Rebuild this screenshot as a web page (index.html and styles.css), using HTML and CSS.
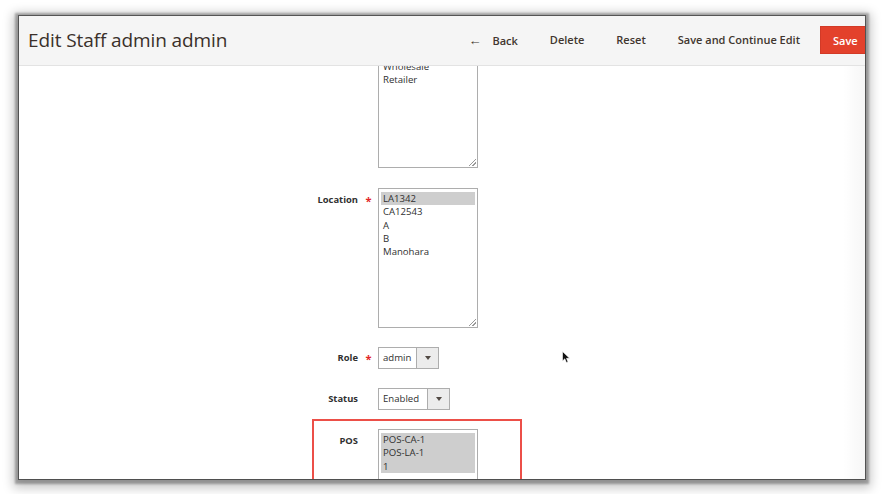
FILE: index.html
```html
<!DOCTYPE html>
<html>
<head>
<meta charset="utf-8">
<link rel="stylesheet" href="styles.css">
</head>
<body>
<div class="window">
  <div class="content">
    <div class="form">
      <div class="row row-multi row-groups">
        <div class="label"></div>
        <div class="req"></div>
        <div class="multi">
          <div class="opt">NOT LOGGED IN</div>
          <div class="opt">General</div>
          <div class="opt">Wholesale</div>
          <div class="opt">Retailer</div>
          <span class="grip"></span>
        </div>
      </div>
      <div class="row row-multi row-location">
        <div class="label">Location</div>
        <div class="req">*</div>
        <div class="multi">
          <div class="opt sel">LA1342</div>
          <div class="opt">CA12543</div>
          <div class="opt">A</div>
          <div class="opt">B</div>
          <div class="opt">Manohara</div>
          <span class="grip"></span>
        </div>
      </div>
      <div class="row row-select row-role">
        <div class="label">Role</div>
        <div class="req">*</div>
        <div class="select select-role">
          <span class="value">admin</span>
          <span class="arrow"><i></i></span>
        </div>
      </div>
      <div class="row row-select row-status">
        <div class="label">Status</div>
        <div class="req"></div>
        <div class="select select-status">
          <span class="value">Enabled</span>
          <span class="arrow"><i></i></span>
        </div>
      </div>
      <div class="row row-multi row-pos">
        <div class="label">POS</div>
        <div class="req"></div>
        <div class="multi">
          <div class="opt sel">POS-CA-1</div>
          <div class="opt sel">POS-LA-1</div>
          <div class="opt sel">1</div>
        </div>
        <div class="highlight"></div>
      </div>
    </div>
    <svg class="cursor" width="9" height="13" viewBox="0 0 9 13"><path d="M0.5 0.5 L0.5 10 L2.8 7.8 L4.4 11.6 L6 10.9 L4.5 7.3 L7.6 7.3 Z" fill="#111" stroke="#fff" stroke-width="0.6"/></svg>
    <div class="edge"></div>
  </div>
  <header class="page-header">
    <h1 class="title">Edit Staff admin admin</h1>
    <div class="actions">
      <button class="act back"><span class="arr">&#8592;</span>Back</button>
      <button class="act">Delete</button>
      <button class="act">Reset</button>
      <button class="act">Save and Continue Edit</button>
      <button class="act primary">Save</button>
    </div>
  </header>
</div>
</body>
</html>
```
FILE: styles.css
```css
* { box-sizing: border-box; }
html, body { margin: 0; padding: 0; background: #fff; }
body {
  font-family: "Open Sans", "Noto Sans", "Liberation Sans", sans-serif;
  color: #303030;
  padding: 16px 0 0 19px;
  width: 884px;
  height: 494px;
  overflow: hidden;
}
.window {
  position: relative;
  width: 846px;
  height: 463px;
  background: #fff;
  overflow: hidden;
  box-shadow: 0 0 0 1px rgba(0,0,0,0.45), 0 1px 2px 4px rgba(0,0,0,0.28), 0 3px 10px 6px rgba(0,0,0,0.22);
}
.page-header {
  position: absolute;
  top: 0; left: 0; right: 0;
  height: 50px;
  background: #f5f5f5;
  border-bottom: 1px solid #e3e3e3;
  display: flex;
  align-items: center;
  padding-left: 9px;
}
.title {
  margin: 0;
  font-weight: 400;
  font-size: 19px;
  color: #3a302a;
  letter-spacing: -0.1px;
  position: relative;
  top: -1px;
}
.actions {
  margin-left: auto;
  margin-right: -4px;
  display: flex;
  gap: 8px;
  align-items: center;
  position: relative;
  top: -1px;
}
.act {
  border: 0;
  background: transparent;
  font-family: inherit;
  font-weight: 600;
  font-size: 11px;
  color: #41362f;
  padding: 0 12px;
  height: 28px;
  line-height: 28px;
}
.act .arr {
  font-weight: 700;
  font-size: 13px;
  margin-right: 11px;
  position: relative;
  top: 0;
}
.act.primary {
  background: #e3412c;
  color: #fff;
  border: 1px solid #d23a27;
  padding: 0 12px;
  width: 49px;
  text-align: left;
}
.content {
  position: absolute;
  inset: 0;
}
.form {
  padding-top: 13px;
  display: flex;
  flex-direction: column;
}
.row {
  display: grid;
  grid-template-columns: 339px 20px auto;
  position: relative;
}
.row-multi { align-items: start; }
.row-select { align-items: center; }
.row-location { margin-top: 20px; }
.row-role { margin-top: 19px; }
.row-status { margin-top: 19px; }
.row-pos { margin-top: 19px; }
.label {
  text-align: right;
  font-weight: 700;
  font-size: 9.4px;
  color: #303030;
  line-height: 13px;
}
.row-multi .label { padding-top: 5px; }
.row-select .label { padding-bottom: 2px; }
.req {
  color: #e22626;
  font-size: 11px;
  font-weight: 700;
  text-align: center;
  line-height: 13px;
  padding-left: 1px;
}
.row-multi .req { padding-top: 6px; }
.row-select .req { padding-top: 1px; }
.multi {
  position: relative;
  width: 100px;
  height: 140px;
  border: 1px solid #adadad;
  padding: 3px 2px;
  font-size: 9.6px;
  line-height: 13.3px;
  color: #303030;
  background: #fff;
}
.row-groups .multi { height: 139px; }
.opt { padding-left: 2px; white-space: nowrap; }
.opt.sel { background: #cecece; }
.grip {
  position: absolute;
  right: 1px;
  bottom: 1px;
  width: 7px;
  height: 7px;
  background:
    linear-gradient(135deg, transparent 45%, #9a9a9a 45%, #9a9a9a 55%, transparent 55%, transparent 70%, #9a9a9a 70%, #9a9a9a 80%, transparent 80%);
}
.select {
  display: flex;
  height: 22px;
  border: 1px solid #adadad;
  font-size: 9.6px;
  color: #303030;
  background: #fff;
}
.select-role { width: 61px; }
.select-status { width: 72px; }
.select .value {
  flex: 1;
  padding-left: 4px;
  line-height: 19px;
}
.select .arrow {
  width: 22px;
  border-left: 1px solid #adadad;
  background: #ececec;
  display: flex;
  align-items: center;
  justify-content: center;
}
.select .arrow i {
  width: 0; height: 0;
  border-left: 3px solid transparent;
  border-right: 3px solid transparent;
  border-top: 4px solid #514943;
}
.highlight {
  position: absolute;
  left: 293px;
  top: -10px;
  width: 210px;
  height: 80px;
  border: 2px solid #ec4f48;
  border-bottom: 0;
  pointer-events: none;
}
.cursor {
  position: absolute;
  left: 543px;
  top: 335px;
}
.edge {
  position: absolute;
  top: 50px;
  right: 0;
  bottom: 0;
  width: 22px;
  background: linear-gradient(to right, rgba(0,0,0,0), rgba(0,0,0,0.035));
}
```
